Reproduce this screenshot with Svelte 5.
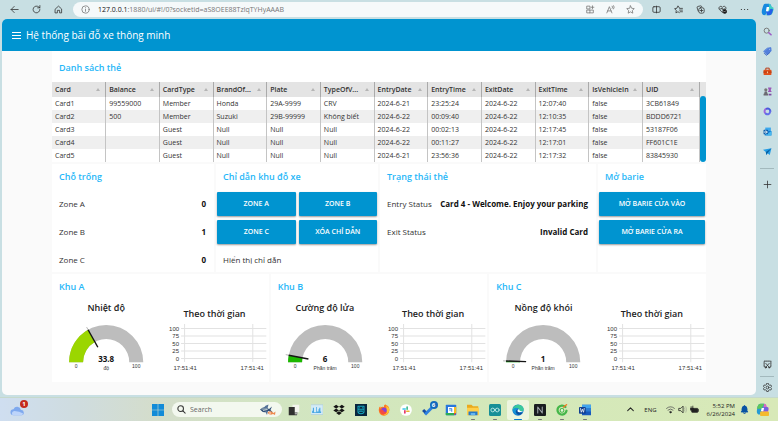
<script>
  const columns = ['Card', 'Balance', 'CardType', 'BrandOf...', 'Plate', 'TypeOfV...', 'EntryDate', 'EntryTime', 'ExitDate', 'ExitTime', 'IsVehicleIn', 'UID'];
  const rows = [
    ['Card1', '99559000', 'Member', 'Honda', '29A-9999', 'CRV', '2024-6-21', '23:25:24', '2024-6-22', '12:07:40', 'false', '3CB61849'],
    ['Card2', '500', 'Member', 'Suzuki', '29B-99999', 'Không biết', '2024-6-22', '00:09:40', '2024-6-22', '12:10:35', 'false', 'BDDD6721'],
    ['Card3', '', 'Guest', 'Null', 'Null', 'Null', '2024-6-22', '00:02:13', '2024-6-22', '12:17:45', 'false', '53187F06'],
    ['Card4', '', 'Guest', 'Null', 'Null', 'Null', '2024-6-22', '00:11:27', '2024-6-22', '12:17:01', 'false', 'FF601C1E'],
    ['Card5', '', 'Guest', 'Null', 'Null', 'Null', '2024-6-21', '23:56:36', '2024-6-22', '12:17:32', 'false', '83845930']
  ];
  const zones = [['Zone A', '0'], ['Zone B', '1'], ['Zone C', '0']];
  const statuses = [['Entry Status', 'Card 4 - Welcome. Enjoy your parking'], ['Exit Status', 'Invalid Card']];
  const areas = [
    { title: 'Khu A', gauge: 'Nhiệt độ', value: 33.8, unit: 'độ', color: '#9bd600' },
    { title: 'Khu B', gauge: 'Cường độ lửa', value: 6, unit: 'Phần trăm', color: '#1cb800' },
    { title: 'Khu C', gauge: 'Nồng độ khói', value: 1, unit: 'Phần trăm', color: '#12b512' }
  ];
  const ticks = [100, 75, 50, 25, 0];
  const sideApps = ['find', 'tag', 'toolbox', 'games', 'm365', 'outlook', 'send'];
  const taskApps = ['taskview', 'monitor', 'dropbox', 'robot', 'firefox', 'slack', 'todo', 'calendar', 'folder', 'arduino', 'edge', 'notion', 'coccoc', 'word'];
  const running = ['folder', 'arduino', 'notion', 'coccoc', 'word'];

  function point(value, r) {
    const a = Math.PI * (1 - value / 100);
    return `${54 + r * Math.cos(a)} ${47 - r * Math.sin(a)}`;
  }
  function arc(from, to) {
    return `M${point(from, 37)}A37 37 0 0 1 ${point(to, 37)}L${point(to, 23)}A23 23 0 0 0 ${point(from, 23)}Z`;
  }
</script>

{#snippet icon(name)}
  <svg class="icon" viewBox="0 0 16 16" fill="none" stroke="currentColor" stroke-width="1.4" stroke-linecap="round" stroke-linejoin="round" aria-hidden="true">
    {#if name === 'back'}
      <path d="M14.5 8H2M7.5 2.5 2 8l5.500 5.500" />
    {:else if name === 'refresh'}
      <path d="M14 8a6 6 0 1 1-2-4.500L14 5M14 1v4h-4" />
    {:else if name === 'home'}
      <path d="M2.500 7 8 2l5.500 5v7H10V9.500H6V14H2.500Z" />
    {:else if name === 'info'}
      <circle cx="8" cy="8" r="6.500" /><path d="M8 7.500v3.700M8 4.800v.1" />
    {:else if name === 'apps'}
      <path d="M2 2h5v5H2zM2 9h5v5H2zM7 9h6v5H7M11.500 1.500v5M9 4h5" />
    {:else if name === 'read'}
      <path d="M1.500 14 6 3l4.500 11M3 10.500h6M11 2q2 1.500 0 4M13.500 1q2.500 2.500 0 6" />
    {:else if name === 'star'}
      <path d="m8 1.500 2 4.300 4.700.6-3.400 3.300.8 4.800L8 12.200l-4.100 2.300.8-4.800-3.400-3.300 4.700-.6Z" />
    {:else if name === 'split'}
      <rect x="1.500" y="3" width="13" height="10" rx="2" /><path d="M8 2v12" />
    {:else if name === 'favorites'}
      <path d="M9.500 5 7 1.500 5.200 5.700 1 6.500l3 3-.6 4.500L7 12l2.500 1.500M10 6h5M10 9h5M11 12h4" />
    {:else if name === 'collections'}
      <path d="M4 11 2 5q-.5-2 1.500-2.500l5-1q1.500 0 2 2" /><rect x="5" y="5" width="9.500" height="9.500" rx="3" /><path d="M9.800 7.500v4.500M7.500 9.800H12" />
    {:else if name === 'health'}
      <path d="M8 13.500 2.500 8C-.5 4 5 0 8 4c3-4 8.500 0 5.500 4M3 7h3l1-2 2 4 1-2h2" /><circle cx="12" cy="11.500" r="3.500" fill="#111" /><path d="m10.500 11.500 1 1 2-2" stroke="#fff" stroke-width="1" />
    {:else if name === 'more'}
      <path d="M2.500 8h.1M8 8h.1M13.500 8h.1" stroke-width="2.200" />
    {:else if name === 'copilot'}
      <g stroke="none"><path d="M5 1h5q2 0 2.500 2l.5 2H9L6.500 13Q6 15 4 15q-2.500 0-3-3Q.5 10 2.500 4 3.500 1 5 1Z" fill="#1689df" /><path d="M9 1q2.500 0 3.300 2l.7 2q3-.5 2.500 3-1 5-2.500 6-1 1-3 1H5q2 0 2.500-2L10 5Q10.500 2 9 1Z" fill="#3ed0c2" /><path d="m6 10 1.500 5H10q3 0 4-4l1-3q-3-2-4 0l-1 2Z" fill="#2460e8" /><path d="m7 5-1 5h3l1-5Z" fill="#fff" /></g>
    {:else if name === 'find'}
      <circle cx="6.500" cy="6.500" r="4.500" stroke="#777" stroke-width="1.700" /><path d="m10 10 4.500 4" stroke="#9d5dc7" stroke-width="2.400" />
    {:else if name === 'tag'}
      <path d="m8 2 6-1 .5 6-7 7-6-6Z" fill="#527fdb" stroke="#527fdb" /><path d="m2 11 4 4 6-5" stroke="#355fc0" /><circle cx="12" cy="4" r=".8" fill="#fff" stroke="none" />
    {:else if name === 'toolbox'}
      <path d="M5 5V2h6v3" stroke="#b9360f" stroke-width="1.700" /><rect x="1" y="5" width="14" height="9" rx="1" fill="#e0501b" stroke="none" /><path d="M1 9h14" stroke="#a8330f" /><path d="M7 8h2v3H7z" fill="#f4c496" stroke="none" />
    {:else if name === 'games'}
      <g stroke="none"><circle cx="5" cy="5" r="2.800" fill="#777" /><path d="M3 8h4l1 4h1v3H1v-3h1Z" fill="#6b6b72" /><path d="M9 1h6v2h-1v4h1v2H9V7h1V3H9Z" fill="#9a56b8" /><path d="M10 12h5v3h-5Z" fill="#7b4ba0" /></g>
    {:else if name === 'm365'}
      <path d="M6 3a5 5 0 0 0-2 8" stroke="#9a65dd" stroke-width="3.500" /><path d="M7 3q5-1 6 4" stroke="#465bdc" stroke-width="3.500" /><path d="M5 12q6 3 8-4" stroke="#626ee9" stroke-width="3.500" />
    {:else if name === 'outlook'}
      <g stroke="none"><rect x="4" y="1" width="10" height="8" fill="#3ca9ee" /><path d="M3 7h12v8H3Z" fill="#1379ce" /><path d="m15 7-7 5-3-2v5h10Z" fill="#46b9f1" /><rect x="1" y="5" width="8" height="8" rx="1" fill="#0a5ca8" /></g><circle cx="5" cy="9" r="2" stroke="#fff" />
    {:else if name === 'send'}
      <g stroke="none"><path d="m0 5 15-3-3 12-4-3-2 3-1-5Z" fill="#249de5" /><path d="M15 2 5 9l1 5 2-3Z" fill="#0862a5" /></g>
    {:else if name === 'plus'}
      <path d="M8 2v12M2 8h12" />
    {:else if name === 'capture'}
      <path d="M4 12H2V2h12v10h-2" stroke-dasharray="3 1" /><path d="m5 6 6 7M11 6l-6 7" /><circle cx="5" cy="13.500" r="1" /><circle cx="11" cy="13.500" r="1" />
    {:else if name === 'settings'}
      <path d="m6.500 1-.5 2-2 1-2-.5L.800 6 2.500 8 .800 10 2 12.500l2-.5 2 1 .5 2h3l.5-2 2-1 2 .5 1.200-2.500-1.700-2 1.700-2L14 3.500l-2 .5-2-1-.5-2Z" /><circle cx="8" cy="8" r="2.500" />
    {:else if name === 'weather'}
      <g stroke="none"><path d="M4 14a3.500 3.500 0 0 1 0-7 4.500 4.500 0 0 1 8.500 1A3 3 0 0 1 13 14Z" fill="#7fa9ee" /><path d="M3 14a3 3 0 0 1 2-5q6 0 10 3-.5 2-2 2Z" fill="#bdd4fa" /></g>
    {:else if name === 'windows'}
      <g stroke="none" fill="#128bd8"><path d="M0 0h7.600v7.600H0zM8.400 0H16v7.600H8.400zM0 8.400h7.600V16H0zM8.400 8.400H16V16H8.400z" /></g>
    {:else if name === 'magnify'}
      <circle cx="6.500" cy="6.500" r="5" stroke-width="1.800" /><path d="m10.500 10.500 4 4" stroke-width="1.800" />
    {:else if name === 'taskview'}
      <g stroke="none"><path d="M6 1h9v10H6Z" fill="#f3f4ee" /><path d="M1 4h8v7h3v4H1Z" fill="#303030" /><path d="M9 11h4v3H9Z" fill="#aaa" /></g>
    {:else if name === 'monitor'}
      <rect x="0" y="1" width="16" height="13" fill="#d3ebf7" stroke="#a7c9df" stroke-width=".8" /><path d="M1.500 12V9h1V5h1.500v6h3V4h1v6h2V7h1V5h1.500v5h1v2Z" fill="#4ba9e3" stroke="none" />
    {:else if name === 'dropbox'}
      <path d="m4.200 1 3.800 2.500L4.200 6 .4 3.500Zm7.600 0 3.800 2.500L11.800 6 8 3.500ZM4.200 6 8 8.500 4.200 11 .4 8.500Zm7.600 0 3.800 2.500L11.800 11 8 8.500ZM4.200 12 8 9.500l3.800 2.500L8 14.500Z" fill="#151515" stroke="none" />
    {:else if name === 'robot'}
      <rect width="16" height="16" fill="#08263e" stroke="none" /><path d="M4 3h8v7q0 3-4 3t-4-3ZM4 7h8M6 9.500h4M6 5h.1M10 5h.1" stroke="#16a6bf" />
    {:else if name === 'firefox'}
      <g stroke="none"><path d="M8 2q3-3 2-1 6 2 5 8-1 6-7 6.500Q1 15 1 8q0-4 2-5v2q2-2 5-1Z" fill="#ff7b20" /><path d="M11 2q6 4 3 9-2 4-7 4 5-3 4-13Z" fill="#ffc52f" /><circle cx="8" cy="8.500" r="3.700" fill="#8542d6" /><path d="M2 7q5 0 6 3 2 1 4 0-1 4-5 4-5-1-5-7Z" fill="#f34b45" /></g>
    {:else if name === 'slack'}
      <circle cx="8" cy="8" r="7.800" fill="#fff" stroke="none" /><g stroke-width="2"><path d="M4 6.500h3" stroke="#36c5f0" /><path d="M9.500 4v3" stroke="#2eb67d" /><path d="M9 9.500h3" stroke="#ecb22e" /><path d="M6.500 9v3" stroke="#e01e5a" /></g>
    {:else if name === 'todo'}
      <path d="m1.500 8 4 4" stroke="#174ca1" stroke-width="4" stroke-linecap="butt" /><path d="m4 14 9-9" stroke="#2d80df" stroke-width="4" stroke-linecap="butt" />
    {:else if name === 'calendar'}
      <g stroke="none"><rect x="1" y="1" width="14" height="14" rx="1" fill="#2878dc" /><path d="M1 12h11v3H2q-1 0-1-1Z" fill="#2cae55" /><path d="M12 4h3v8h-3Z" fill="#f8bd20" /><path d="M4 4h8v8H4Z" fill="#fff" /><path d="M12 12h3l-3 3Z" fill="#e34b37" /></g><path d="M6 6h3v4M6 8h3" stroke="#2878dc" stroke-width="1" />
    {:else if name === 'folder'}
      <g stroke="none"><path d="M0 1h6l2 2h7v5H0Z" fill="#e9a91d" /><path d="M0 5h16v10H0Z" fill="#ffcf4a" /><path d="M2 10h12v5H2Z" fill="#287ac7" /><path d="M5 12h6v3H5Z" fill="#65b5ed" /></g>
    {:else if name === 'arduino'}
      <rect width="16" height="16" rx="2" fill="#168f97" stroke="none" /><circle cx="5" cy="8" r="2.500" stroke="#bfeae7" stroke-width="1.200" /><circle cx="11" cy="8" r="2.500" stroke="#bfeae7" stroke-width="1.200" />
    {:else if name === 'edge'}
      <g stroke="none"><circle cx="8" cy="8" r="7.500" fill="#1478ca" /><path d="M1 7C2-1 14-1 15.500 6c.5 5-5 5-6 3C10 4 3 4 1 9Z" fill="#3ac99b" /><path d="M1 8q3-5 7-2-5 3 0 8-6 0-7-6Z" fill="#1594d8" /><path d="M8 7q-2 5 6 5-6 6-9-1-.5-3 3-4Z" fill="#0b4e9d" /><path d="M8 7q-2 4 2 4l5-1-5-1q1-2-2-2Z" fill="#fff" /></g>
    {:else if name === 'notion'}
      <rect width="16" height="16" rx="1.500" fill="#191d20" stroke="none" /><path d="M5 12V4l6 8V4" stroke="#a2a9ae" />
    {:else if name === 'coccoc'}
      <path d="M12.500 4A6 6 0 1 0 14 9" stroke="#45b749" stroke-width="3" /><circle cx="8" cy="8.500" r="2.500" fill="#e5f3d6" stroke="#45b749" stroke-width="1.400" /><path d="m10 4 4-3" stroke="#f17a26" stroke-width="2" />
    {:else if name === 'word'}
      <g stroke="none"><path d="M4 1h12v14H4Z" fill="#185abd" /><path d="M4 1h12v5H4Z" fill="#41a5ee" /><path d="M4 6h12v4H4Z" fill="#2b7cd3" /><rect y="4" width="9" height="9" rx="1" fill="#103f91" /></g><path d="m2 6 1 5 1.500-4L6 11l1-5" stroke="#fff" stroke-width="1" />
    {:else if name === 'chevron'}
      <path d="m3 10 5-5 5 5" stroke-width="1.800" />
    {:else if name === 'wifi'}
      <path d="M1 6q7-6 14 0M3.500 9q4.500-4 9 0M6 12q2-2 4 0" stroke-width="1.400" stroke="#555" /><circle cx="8" cy="13" r="1" fill="currentColor" />
    {:else if name === 'sound'}
      <path d="M2 6h3l4-4v12l-4-4H2Z" /><path d="M11.500 5q2 3 0 6M14 3q3 5 0 10" stroke="#aab49c" />
    {:else if name === 'battery'}
      <rect x="3" y="6" width="11" height="7" rx="1" fill="currentColor" /><path d="M15.500 8v3M2 3v4M5 2v4M1 6h5v3H1Z" fill="currentColor" />
    {:else if name === 'bell'}
      <path d="M8 1.500Q3.500 2 3.500 7v3L2 12.500h12L12.500 10V7Q12.500 2 8 1.500ZM6 14q2 2 4 0" fill="#0753a4" stroke="#0753a4" />
    {:else if name === 'copilotpro'}
      <g stroke="none"><path d="M5 1h5q2 0 3 4H9L6 14Q1 15 1 10 2 1 5 1Z" fill="#269bd4" /><path d="M10 1q3 0 3 4h2q1 2-.5 6L13 14H5q3-1 3-4Z" fill="#dc68c1" /><path d="M2 4q1-3 4-3h4L7 7H1Z" fill="#5fc75a" /><path d="M9 5h5q2 1 1 5H8Z" fill="#7362df" /><path d="m7 6-1 4h3l1-4Z" fill="#fff" /><rect x="5" y="10.500" width="11" height="5.500" rx="1" fill="#f4ba2e" /></g>
    {/if}
  </svg>
{/snippet}

<div class="screen">
  <nav class="toolbar" aria-label="Browser">
    <div class="nav-buttons">
      <button aria-label="Back">{@render icon('back')}</button>
      <button aria-label="Refresh">{@render icon('refresh')}</button>
      <button aria-label="Home">{@render icon('home')}</button>
    </div>
    <div class="address">
      <button aria-label="Site information">{@render icon('info')}</button>
      <a class="url" href="#/0"><b>127.0.0.1</b>:1880/ui/#!/0?socketid=aS8OEE88TzlqTYHyAAAB</a>
      <div class="address-tools">
        <button aria-label="Apps">{@render icon('apps')}</button>
        <button aria-label="Read aloud">{@render icon('read')}</button>
        <button aria-label="Add to favorites">{@render icon('star')}</button>
      </div>
    </div>
    <div class="tools">
      <button aria-label="Split screen">{@render icon('split')}</button>
      <button aria-label="Favorites">{@render icon('favorites')}</button>
      <button aria-label="Collections">{@render icon('collections')}</button>
      <button aria-label="Browser essentials">{@render icon('health')}</button>
      <button aria-label="More">{@render icon('more')}</button>
    </div>
    <button class="copilot" aria-label="Copilot">{@render icon('copilot')}</button>
  </nav>

  <div class="middle">
    <div class="page">
      <header>
        <button class="menu" aria-label="Menu"><i></i><i></i><i></i></button>
        <h1>Hệ thống bãi đỗ xe thông minh</h1>
      </header>
      <main>
        <section class="card list">
          <h2>Danh sách thẻ</h2>
          <div class="grid">
            <table>
              <thead>
                <tr>
                  {#each columns as c}
                    <th><span class="head"><span>{c}</span><i></i></span></th>
                  {/each}
                </tr>
              </thead>
              <tbody>
                {#each rows as row}
                  <tr>{#each row as cell}<td>{cell}</td>{/each}</tr>
                {/each}
              </tbody>
            </table>
            <div class="scroll"><i></i></div>
          </div>
        </section>

        <div class="controls">
          <section class="card">
            <h2>Chỗ trống</h2>
            <div class="stack">
              {#each zones as [name, count]}
                <div class="line"><span>{name}</span><b>{count}</b></div>
              {/each}
            </div>
          </section>
          <section class="card">
            <h2>Chỉ dẫn khu đỗ xe</h2>
            <div class="stack pair">
              <button class="action">ZONE A</button>
              <button class="action">ZONE B</button>
              <button class="action">ZONE C</button>
              <button class="action">XÓA CHỈ DẪN</button>
              <div class="line"><span>Hiển thị chỉ dẫn</span></div>
            </div>
          </section>
          <section class="card">
            <h2>Trạng thái thẻ</h2>
            <div class="stack">
              {#each statuses as [name, text]}
                <div class="line"><span>{name}</span><b>{text}</b></div>
              {/each}
            </div>
          </section>
          <section class="card">
            <h2>Mở barie</h2>
            <div class="stack">
              <button class="action">MỞ BARIE CỬA VÀO</button>
              <button class="action">MỞ BARIE CỬA RA</button>
            </div>
          </section>
        </div>

        <div class="areas">
          {#each areas as area}
            <section class="card area">
              <h2>{area.title}</h2>
              <div class="plots">
                <figure>
                  <figcaption>{area.gauge}</figcaption>
                  <svg viewBox="0 0 108 58">
                    <path d={arc(0, 100)} fill="#bdbdbd" />
                    <path d={arc(0, area.value)} fill={area.color} />
                    <path d="M{point(area.value, 40)}L{point(area.value, 37)}" stroke="#888" stroke-width=".6" />
                    <path d="M{point(area.value, 37)}L{point(area.value, 17)}" stroke="#151515" stroke-width="1.400" />
                    <text class="value" x="54" y="47">{area.value}</text>
                    <text class="small" x="54" y="55">{area.unit}</text>
                    <text class="small" x="24" y="53">0</text>
                    <text class="small" x="84" y="53">100</text>
                  </svg>
                </figure>
                <figure class="chart">
                  <figcaption>Theo thời gian</figcaption>
                  <svg viewBox="0 0 108 54">
                    <g stroke="#e2e2e2" stroke-width="1">
                      {#each ticks as _, i}
                        <path d="M21 {7.5 + i * 7.5}H106" />
                      {/each}
                      <path d="M24.500 3V41M92.500 3V41" />
                    </g>
                    {#each ticks as t, i}
                      <text class="tick end" x="19" y={9.5 + i * 7.5}>{t}</text>
                    {/each}
                    <text class="tick" x="25" y="49">17:51:41</text>
                    <text class="tick" x="92" y="49">17:51:41</text>
                  </svg>
                </figure>
              </div>
            </section>
          {/each}
        </div>
      </main>
    </div>

    <aside>
      {#each sideApps as app}
        <button aria-label={app}>{@render icon(app)}</button>
      {/each}
      <hr />
      <button aria-label="Customize">{@render icon('plus')}</button>
      <button class="bottom" aria-label="Screenshot">{@render icon('capture')}</button>
      <hr />
      <button aria-label="Settings">{@render icon('settings')}</button>
    </aside>
  </div>

  <footer>
    <div class="left"><button class="weather" aria-label="Weather">{@render icon('weather')}<b class="badge">1</b></button></div>
    <button class="start" aria-label="Start">{@render icon('windows')}</button>
    <label class="search">
      {@render icon('magnify')}
      <input type="text" placeholder="Search" aria-label="Search" />
      <svg class="fish" viewBox="0 0 36 24" aria-hidden="true">
        <path d="M2 11q9-8 18-1l6-5-3 7 5 5-9-3Q9 20 2 11Z" fill="#315079" /><path d="M9 8q3-6 10-7l-2 8M12 14l4 8 2-8" fill="#547298" /><path d="M5 10h12M8 13l9-2" stroke="#e7efe9" stroke-width="1.500" /><path d="M17 17q7-5 12 1l4-3-1 7-4-2q-7 4-11-3Z" fill="#ee8a50" /><path d="M22 16v5" stroke="#fff" stroke-width="1.500" />
      </svg>
    </label>
    <div class="apps">
      {#each taskApps as app}
        <button class:active={app === 'edge'} class:running={running.includes(app)} aria-label={app}>
          {@render icon(app)}
          {#if app === 'todo'}<b class="badge blue">6</b>{/if}
        </button>
      {/each}
    </div>
    <div class="tray">
      <button aria-label="Hidden icons">{@render icon('chevron')}</button>
      <span class="lang">ENG</span>
      <button class="status" aria-label="Network, sound, battery">{@render icon('wifi')}{@render icon('sound')}{@render icon('battery')}</button>
      <time>5:52 PM<br />6/26/2024</time>
      <button aria-label="Notifications">{@render icon('bell')}</button>
      <button class="pro" aria-label="Copilot Pro">{@render icon('copilotpro')}</button>
    </div>
  </footer>
</div>

<style>
  .screen {
    min-height: 100vh;
    display: flex;
    flex-direction: column;
    background: #c8dfe3;
    font-family: "Open Sans", "Noto Sans", sans-serif;
    color: #333;
    font-size: 7px;
    line-height: 12px;
  }
  .screen * { box-sizing: border-box; }
  button {
    font: inherit;
    color: inherit;
    border: 0;
    padding: 0;
    background: none;
    display: flex;
    align-items: center;
    justify-content: center;
  }
  .icon { width: 9px; height: 9px; flex: none; display: block; }
  h1, h2, figure, hr { margin: 0; }

  .toolbar { display: flex; align-items: center; height: 19px; color: #333; }
  .nav-buttons { display: flex; width: 73px; padding-left: 3px; }
  .nav-buttons button { width: 22px; }
  .address {
    flex: 1;
    display: flex;
    align-items: center;
    height: 15px;
    padding: 0 3px 0 8px;
    border-radius: 8px;
    background: #f5f9fa;
    color: #777;
  }
  .url { margin-left: 8px; color: #777; text-decoration: none; white-space: nowrap; }
  .url b { font-weight: 400; color: #111; }
  .address-tools { display: flex; margin-left: auto; }
  .address-tools button { width: 20px; }
  .tools { display: flex; width: 113px; padding-left: 2px; }
  .tools button { flex: 1; }
  .copilot { width: 22px; }
  .copilot .icon { width: 13px; height: 13px; }

  .middle { flex: 1; display: flex; padding-left: 2px; }
  .page { flex: 1; border-radius: 5px; overflow: hidden; background: #fafafa; margin-bottom: 2px; }
  header {
    display: flex;
    align-items: center;
    gap: 5px;
    height: 32px;
    padding-left: 10px;
    background: #0094d0;
    color: #fff;
  }
  .menu { width: 9px; flex-direction: column; gap: 2px; }
  .menu i { width: 9px; height: 1px; background: #fff; }
  h1 { font-size: 10px; line-height: 16px; font-weight: 400; }
  main { padding: 0 50px; display: flex; flex-direction: column; gap: 2px; }
  .card { background: #fff; min-width: 0; }
  h2 {
    padding: 6px 7px 0;
    height: 28px;
    font-size: 9px;
    line-height: 13px;
    font-weight: 600;
    color: #27b7f8;
    white-space: nowrap;
  }
  .list h2 { padding-top: 10px; height: 31px; }
  .grid { display: flex; }
  table { flex: 1; width: 0; table-layout: fixed; border-collapse: collapse; }
  th, td { padding: 0 0 0 3px; text-align: left; white-space: nowrap; height: 13px; border-right: 1px solid #c4c4c4; }
  th { height: 15px; background: #e4e4e4; border-color: #aaa; font-weight: 600; }
  th:last-child { width: 57px; }
  .head { display: flex; align-items: center; justify-content: space-between; padding-right: 5px; }
  .head i { border: 2px solid transparent; border-top: 0; border-bottom: 3px solid #b5b5b5; }
  tbody tr:nth-child(even) { background: #efefef; }
  .scroll { width: 6px; padding-top: 14px; background: linear-gradient(#e4e4e4 15px, #fff 15px); display: flex; }
  .scroll i { flex: 1; border-radius: 3px; background: #0094d0; }

  .controls { display: grid; grid-template-columns: 3fr 3fr 4fr 2fr; gap: 2px; }
  .stack { display: grid; gap: 4px; padding: 0 1px; }
  .pair { grid-template-columns: 1fr 1fr; column-gap: 3px; }
  .line { display: flex; align-items: center; justify-content: space-between; height: 24px; padding: 0 7px 0 6px; font-size: 8px; white-space: nowrap; }
  .line b { color: #111; font-weight: 700; }
  .pair .line { grid-column: 1 / -1; }
  .action {
    height: 24px;
    border-radius: 1px;
    background: #0094d0;
    color: #fff;
    font-weight: 600;
    white-space: nowrap;
    box-shadow: 0 1px 2px #0006;
  }

  .areas { display: grid; grid-template-columns: repeat(3, 1fr); gap: 2px; }
  .area { padding-bottom: 7px; }
  .area h2 { height: 27px; }
  .plots { display: grid; grid-template-columns: 1fr 1fr; }
  figcaption { text-align: center; font-size: 9px; line-height: 14px; font-weight: 600; color: #222; white-space: nowrap; }
  figure svg { display: block; width: 100%; }
  .chart { padding-top: 6px; }
  text { text-anchor: middle; fill: #333; }
  .value { font-size: 8px; font-weight: 700; fill: #111; }
  .small { font: 5px "Liberation Sans", sans-serif; }
  .tick { font: 6px "Liberation Sans", sans-serif; }
  .end { text-anchor: end; }

  aside { width: 22px; display: flex; flex-direction: column; align-items: center; padding-top: 2px; }
  aside button { width: 22px; height: 20px; flex: none; }
  aside hr { width: 14px; border: 0; border-top: 1px solid #a3b9bd; margin: 7px 0 5px; }
  aside .bottom { margin-top: auto; }
  aside .bottom + hr { margin: 2px 0 0; }

  footer {
    display: flex;
    align-items: center;
    height: 24px;
    background: linear-gradient(90deg, #cfdef0 0, #cfdcdf 10%, #d4ddcb 20%, #d2e5c2 35%, #d3e8ba 60%, #d8e9b8 100%);
    border-top: 1px solid #c5d9cc;
  }
  .left { width: 147px; padding-left: 10px; }
  .weather, .apps button { position: relative; }
  .weather .icon { width: 14px; height: 14px; }
  .badge { position: absolute; top: -3px; right: -4px; width: 8px; height: 8px; border-radius: 50%; background: #c42b1c; color: #fff; font-size: 6px; line-height: 8px; text-align: center; }
  .start { width: 22px; margin-right: 3px; }
  .start .icon { width: 12px; height: 12px; }
  .search { display: flex; align-items: center; width: 110px; height: 15px; padding: 0 5px; border-radius: 8px; background: #f3f8ef; gap: 4px; }
  .search input { flex: 1; min-width: 0; width: 0; border: 0; padding: 0; background: none; outline: 0; font: inherit; }
  .search input::placeholder { color: #666; opacity: 1; }
  .fish { width: 18px; height: 12px; flex: none; }
  .apps { display: flex; width: 313px; margin-left: 1px; }
  .apps button { flex: 1; height: 20px; border-radius: 2px; }
  .apps .icon { width: 12px; height: 12px; }
  .apps .active { background: #edf5df; }
  .apps .running::after, .apps .active::after { content: ""; position: absolute; bottom: 0; width: 4px; height: 1px; border-radius: 1px; background: #777; }
  .apps .active::after { width: 8px; background: #0878ce; }
  .apps .badge { top: 1px; right: 2px; }
  .apps .blue { background: #1269bd; }
  .tray { display: flex; align-items: center; margin-left: auto; gap: 5px; padding-right: 9px; font-size: 6px; line-height: 8px; color: #222; white-space: nowrap; }
  .lang { margin: 0 4px; }
  .status { gap: 3px; margin-right: 3px; }
  time { text-align: right; }
  .pro { margin-left: 2px; }
  .pro .icon { width: 13px; height: 13px; }
</style>
